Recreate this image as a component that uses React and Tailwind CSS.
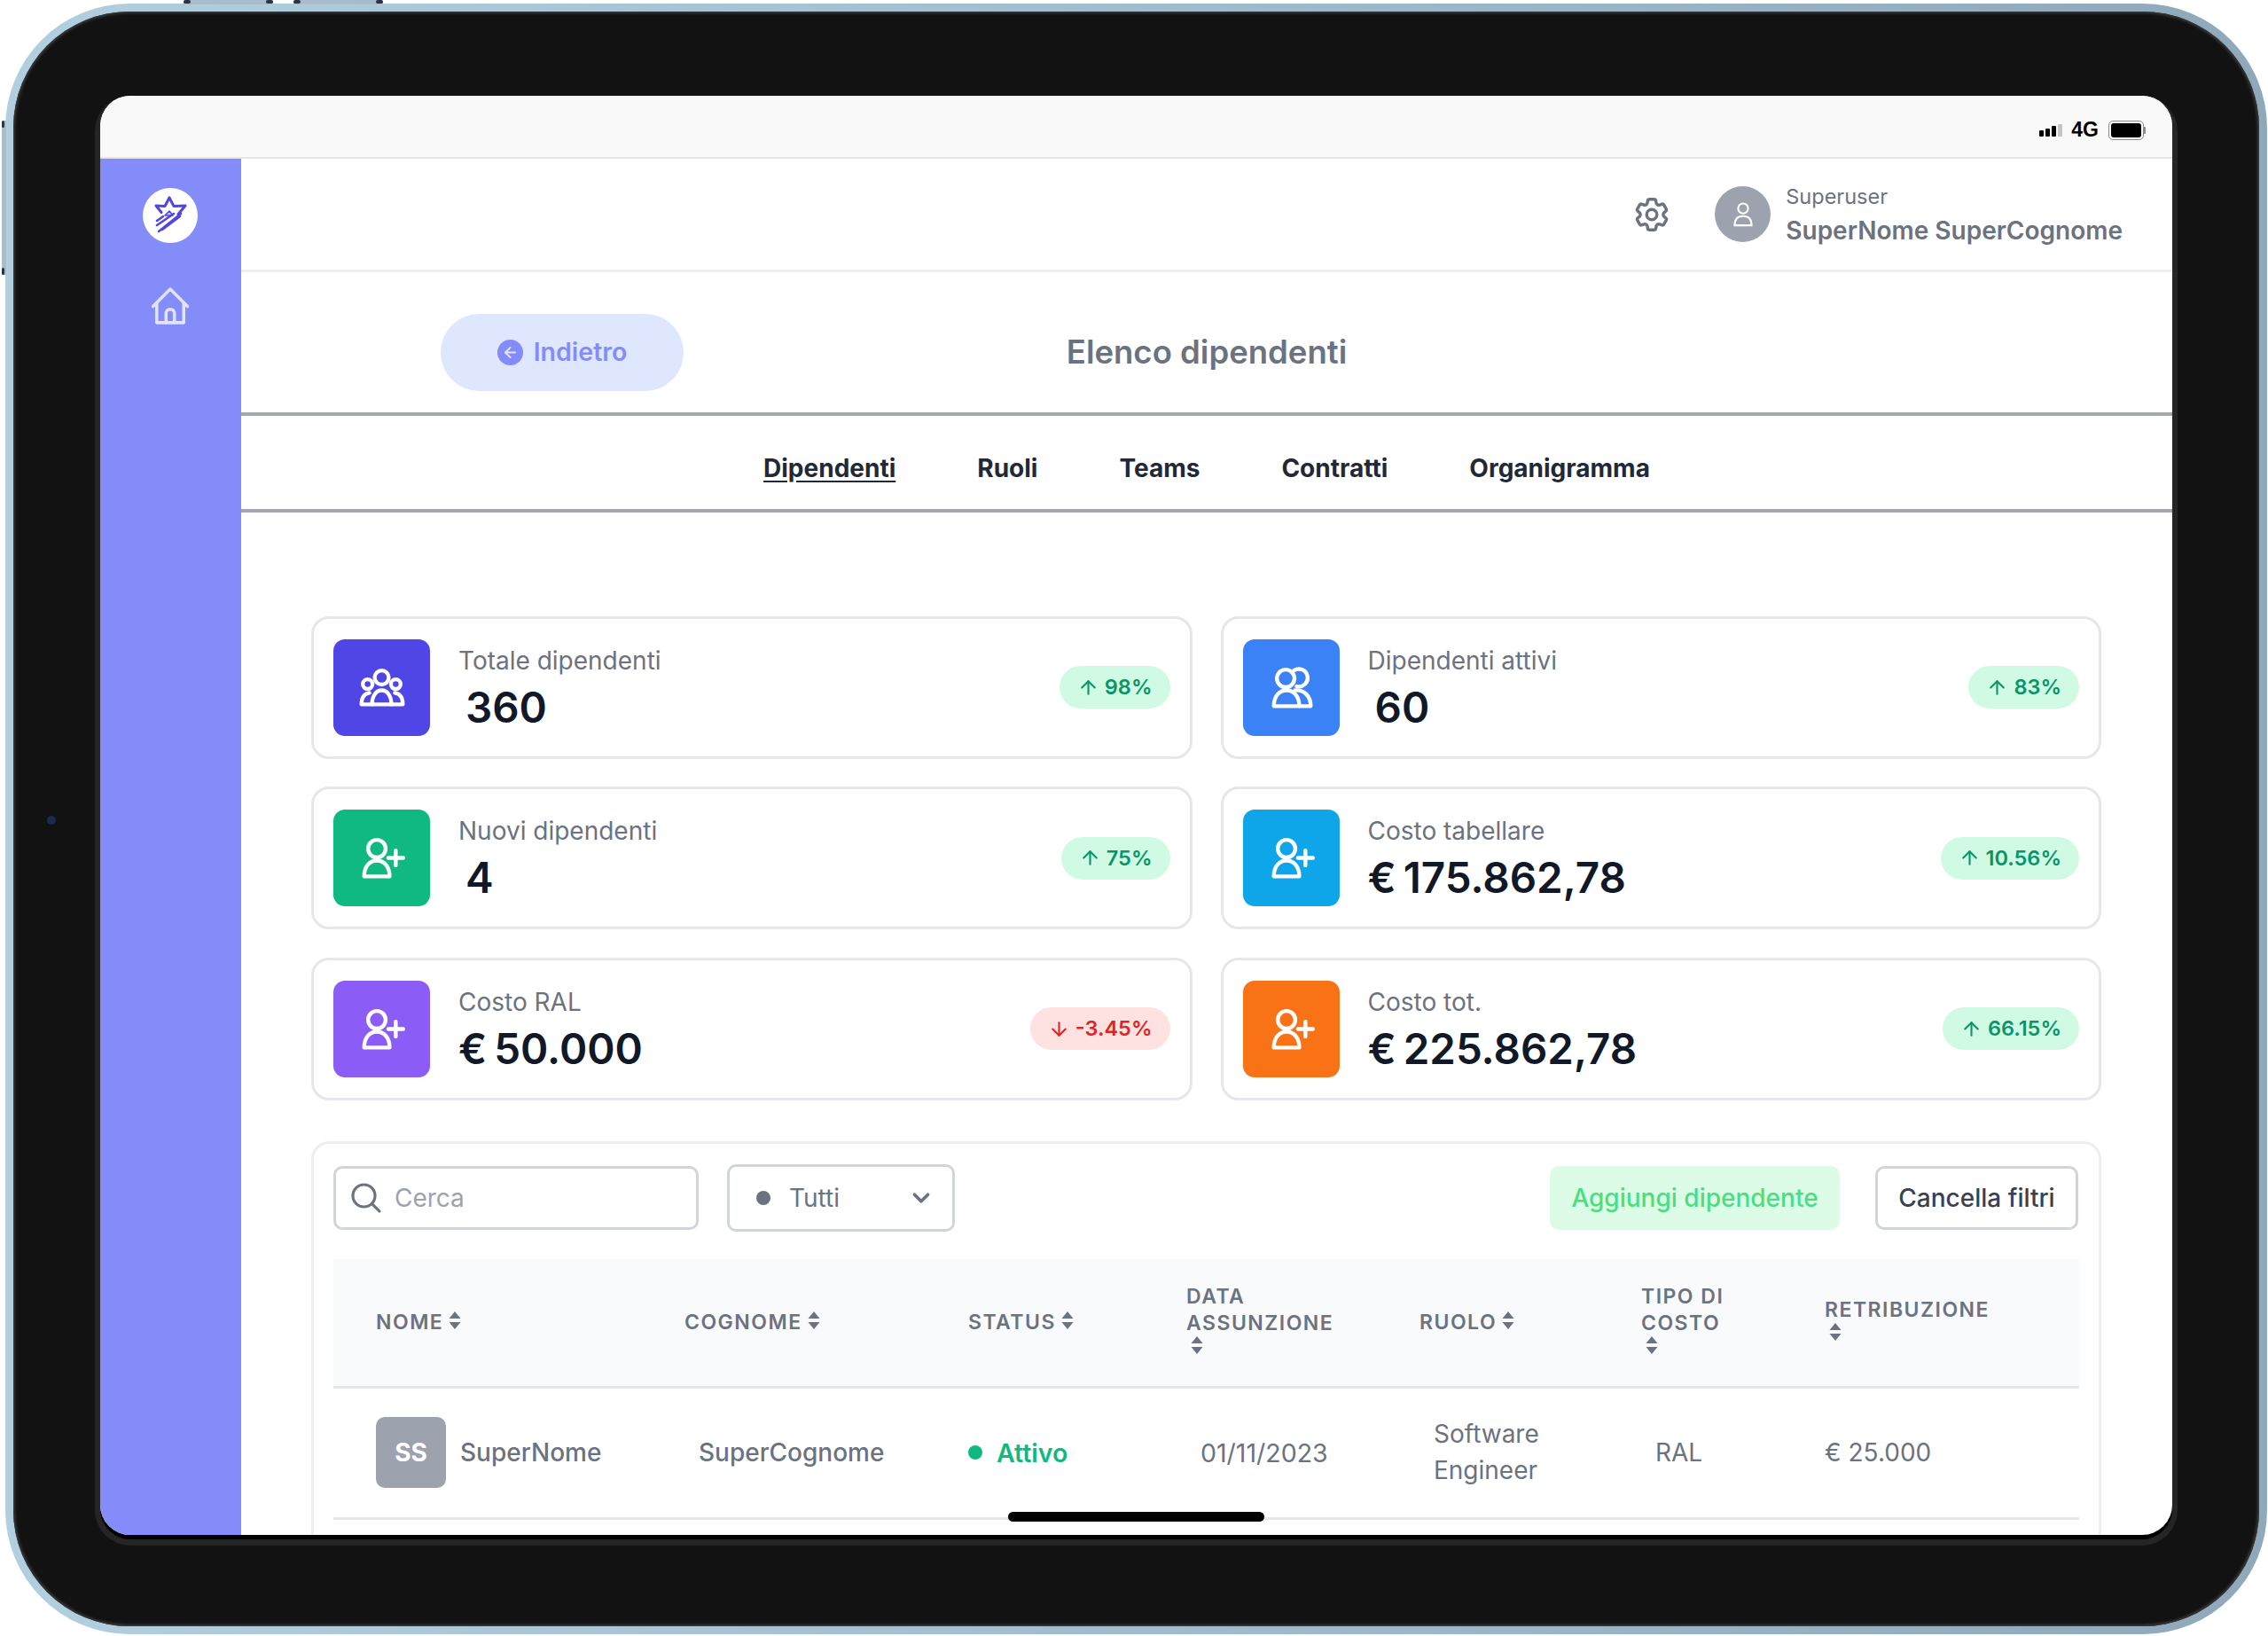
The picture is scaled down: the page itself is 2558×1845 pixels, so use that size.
import React from 'react';
import { ChevronDown, ArrowUp, ArrowDown, ArrowLeft } from 'lucide-react';
import { HiOutlineCog6Tooth, HiOutlineMagnifyingGlass } from 'react-icons/hi2';

// icons are drawn on a 110 box, same as the coloured tile
function UserPlusIcon() {
  return (
    <svg viewBox="0 0 110 110" className="w-full h-full" fill="none" stroke="white" strokeWidth="4.400" strokeLinecap="round" strokeLinejoin="round">
      <circle cx="49.500" cy="44.500" r="10" />
      <path d="M35 76c0-11 6-18 14.500-18S64 65 64 76z" />
      <path d="M71 46.500v17M62.500 55h17" />
    </svg>
  );
}

function UsersIcon() {
  return (
    <svg viewBox="0 0 110 110" className="w-full h-full" fill="none" stroke="white" strokeWidth="4.400" strokeLinecap="round" strokeLinejoin="round">
      <circle cx="48.500" cy="44.500" r="10" />
      <path d="M58 35.500a10 10 0 1 1 3 18" />
      <path d="M35 76c0-11 6-18 14.500-18S64 65 64 76z" />
      <path d="M59 58c10-1 18 6 18 18H64" />
    </svg>
  );
}

function GroupIcon() {
  return (
    <svg viewBox="0 0 110 110" className="w-full h-full" fill="none" stroke="white" strokeWidth="4.400" strokeLinecap="round" strokeLinejoin="round">
      <circle cx="55" cy="43.500" r="8" />
      <circle cx="39" cy="51" r="5.500" />
      <circle cx="71" cy="51" r="5.500" />
      <path d="M44 74c0-10 5-16 11-16s11 6 11 16" />
      <path d="M32 74h47c0-7-3-12-9-13M32 74c0-7 3-12 9-13" />
    </svg>
  );
}

function Logo() {
  return (
    <svg viewBox="0 0 62 62" className="w-[62px] h-[62px]" fill="none" stroke="#4f46e5" strokeLinecap="round" strokeLinejoin="round">
      <path d="M30 11l5 9.500 13-.5-8 9.500" strokeWidth="3" />
      <path d="M30 11l-5 9.500-10-.5 6 7.500" strokeWidth="3" />
      <path d="M25 31l5-5 4 5z" strokeWidth="1.500" fill="#c7cbf8" />
      <path d="M18 49l25-20M16 42l19-13M16 37l7-5M22 47l20-15" strokeWidth="2.500" />
    </svg>
  );
}

function HomeIcon() {
  return (
    <svg viewBox="0 0 40 40" className="w-[42px] h-[42px]" fill="none" stroke="#dfe3fb" strokeWidth="3.400" strokeLinecap="round" strokeLinejoin="round">
      <path d="M1.500 20.500L20 2l18.500 18.500" />
      <path d="M5.500 17v21h29V17" />
      <path d="M15.500 38V28a4.500 4.500 0 0 1 9 0v10" />
    </svg>
  );
}

function SortIcon({ wrap }) {
  return (
    <svg viewBox="0 0 14 20" className={wrap ? 'block ml-[5px] mb-[9px] w-[14px] h-[20px]' : 'inline-block ml-[6px] w-[14px] h-[20px] align-baseline'} fill="#6b7280">
      <path d="M7 0l6.500 8H.500zM7 20l-6.500-8h13z" />
    </svg>
  );
}

function HardwareButton({ className, cap }) {
  return (
    <div className={`absolute flex justify-between bg-[#a9bcc9] ${className}`}>
      <div className={`bg-[#2b3540] rounded-[2px] ${cap}`} />
      <div className={`bg-[#2b3540] rounded-[2px] ${cap}`} />
    </div>
  );
}

const stats = [
  { label: 'Totale dipendenti', value: '360', badge: '98%', tile: 'bg-[#4f46e5]', Icon: GroupIcon, indent: true },
  { label: 'Dipendenti attivi', value: '60', badge: '83%', tile: 'bg-[#3b82f6]', Icon: UsersIcon, indent: true },
  { label: 'Nuovi dipendenti', value: '4', badge: '75%', tile: 'bg-[#10b981]', Icon: UserPlusIcon, indent: true },
  { label: 'Costo tabellare', value: '€ 175.862,78', badge: '10.56%', tile: 'bg-[#0ea5e9]', Icon: UserPlusIcon },
  { label: 'Costo RAL', value: '€ 50.000', badge: '-3.45%', tile: 'bg-[#8b5cf6]', Icon: UserPlusIcon, down: true },
  { label: 'Costo tot.', value: '€ 225.862,78', badge: '66.15%', tile: 'bg-[#f97316]', Icon: UserPlusIcon },
];

const tabs = ['Dipendenti', 'Ruoli', 'Teams', 'Contratti', 'Organigramma'];

function StatCard({ label, value, badge, tile, Icon, indent, down }) {
  return (
    <div className="h-[161px] flex items-center px-[22px] rounded-[20px] border-[3px] border-[#e5e7eb] bg-white">
      <div className={`w-[109px] h-[109px] rounded-[13px] flex-shrink-0 ${tile}`}>
        <Icon />
      </div>
      <div className="ml-[32px] flex-1 h-[109px]">
        <div className="text-[28px] leading-[40px] mt-[4px] text-[#6b7280]">{label}</div>
        <div className={`text-[47.500px] leading-[60px] mt-[3px] font-semibold text-[#111827] [word-spacing:-4px] ${indent ? 'pl-[8px]' : ''}`}>{value}</div>
      </div>
      <div className={`h-[48px] pl-[20px] pr-[20px] rounded-full flex items-center gap-[6px] text-[23.500px] font-semibold ${down ? 'bg-[#fee2e2] text-[#dc2626]' : 'bg-[#d1fae5] text-[#059669]'}`}>
        {down ? <ArrowDown size={25} strokeWidth={2} /> : <ArrowUp size={25} strokeWidth={2} />}
        {badge}
      </div>
    </div>
  );
}

function Th({ children, className = '', wrap }) {
  return (
    <th className={`pl-[24px] pr-[16px] text-left align-middle text-[23px] leading-[30px] font-semibold tracking-[0.065em] uppercase text-[#6b7280] ${className}`}>
      {children}<SortIcon wrap={wrap} />
    </th>
  );
}

export default function App() {
  return (
    <div className="relative w-[2558px] h-[1845px] bg-white pt-[4px] pl-[6px] font-['Inter',sans-serif]">
      {/* hardware buttons and camera */}
      <HardwareButton className="top-0 left-[207px] w-[101px] h-[5px] rounded-t-[3px]" cap="w-[8px] h-[4px]" />
      <HardwareButton className="top-0 left-[331px] w-[101px] h-[5px] rounded-t-[3px]" cap="w-[8px] h-[4px]" />
      <HardwareButton className="top-[136px] left-[2px] w-[5px] h-[174px] flex-col rounded-l-[3px]" cap="w-[3px] h-[8px]" />

      <div className="w-[2551px] h-[1839px] rounded-[140px] bg-linear-to-r from-[#b2cfe0] to-[#8fa9bb] p-[9px]">
        <div className="relative w-full h-full rounded-[131px] bg-[#121212] pl-[98px] pt-[95px] shadow-[inset_0_0_3px_2px_#3a3a3a]">
          <div className="absolute left-[38px] top-[907px] w-[10px] h-[10px] rounded-full bg-[#1b2a4d]" />

          {/* screen */}
          <div className="relative w-[2337px] h-[1623px] rounded-[34px] shadow-[0_5px_0_0_#000,0_6px_0_6px_#252525]">
            <div className="w-full h-full rounded-[34px] overflow-hidden flex flex-col bg-white">
              <div className="h-[71px] flex-shrink-0 bg-[#f9f9f9] border-b-2 border-[#e5e5e5] flex items-center justify-end pt-[8px] pr-[32px] gap-[10px]">
                <div className="flex items-end gap-[2px] h-[14px]">
                  <div className="w-[5px] h-[7px] rounded-[1px] bg-black" />
                  <div className="w-[5px] h-[9px] rounded-[1px] bg-black" />
                  <div className="w-[5px] h-[12px] rounded-[1px] bg-black" />
                  <div className="w-[5px] h-[14px] rounded-[1px] bg-[#c4c4c4]" />
                </div>
                <span className="text-[23px] leading-none font-semibold text-black font-['Liberation_Sans',sans-serif]">4G</span>
                <div className="relative w-[40px] h-[22px] rounded-[5px] border border-[#8a8a8a] p-[2px] ml-[1px]">
                  <div className="w-full h-full rounded-[3px] bg-black" />
                  <div className="absolute -right-[3px] top-[6px] w-[2px] h-[8px] rounded-r-[1px] bg-[#8a8a8a]" />
                </div>
              </div>

              <div className="flex-1 flex min-h-0">
                <aside className="w-[159px] flex-shrink-0 bg-[#838cf8] flex flex-col items-center pt-[33px] pr-[2px]">
                  <div className="w-[62px] h-[62px] rounded-full bg-white">
                    <Logo />
                  </div>
                  <div className="mt-[50px]"><HomeIcon /></div>
                </aside>

                <main className="flex-1 min-w-0 flex flex-col">
                  <header className="h-[128px] flex-shrink-0 flex items-center justify-end pr-[56px] border-b-[3px] border-[#eeeff1]">
                    <HiOutlineCog6Tooth size={46} strokeWidth={1.800} className="text-[#6b7280]" />
                    <div className="ml-[48px] w-[63px] h-[63px] rounded-full bg-[#9ca3af] flex items-center justify-center">
                      <svg viewBox="0 0 30 34" className="w-[26px] h-[30px]" fill="none" stroke="white" strokeWidth="2.400">
                        <circle cx="15" cy="9" r="6.500" />
                        <path d="M4 31c0-8 4-12 11-12s11 4 11 12z" />
                      </svg>
                    </div>
                    <div className="ml-[17px]">
                      <div className="text-[23.500px] leading-[34px] text-[#6b7280]">Superuser</div>
                      <div className="text-[28px] leading-[38px] mt-[2px] font-semibold text-[#6b7280]">SuperNome SuperCognome</div>
                    </div>
                  </header>

                  <div className="h-[162px] flex-shrink-0 grid grid-cols-[1fr_auto_1fr] items-center pt-[22px] border-b-[4px] border-[#a3a8b0]">
                    <div className="pl-[225px]">
                      <button className="w-[274px] h-[87px] rounded-full bg-[#dfe7fe] flex items-center justify-center gap-[12px] text-[#838cf8] text-[28.500px] font-semibold">
                        <span className="w-[29px] h-[29px] rounded-full bg-[#838cf8] flex items-center justify-center">
                          <ArrowLeft size={19} strokeWidth={2.500} className="text-[#dfe7fe]" />
                        </span>
                        Indietro
                      </button>
                    </div>
                    <h1 className="text-[36.500px] font-semibold text-[#6b7280]">Elenco dipendenti</h1>
                    <div />
                  </div>

                  <nav className="h-[109px] flex-shrink-0 flex items-center justify-center gap-[92px] pt-[13px] border-b-[4px] border-[#a3a8b0] text-[28px] font-bold text-[#1f2937]">
                    {tabs.map((tab, i) => (
                      <span key={tab} className={i === 0 ? 'underline underline-offset-4' : ''}>{tab}</span>
                    ))}
                  </nav>

                  <div className="flex-1 min-h-0 pl-[79px] pr-[80px] pt-[116.500px]">
                    <div className="grid grid-cols-2 gap-x-[32px] gap-y-[31.500px]">
                      {stats.map((s) => <StatCard key={s.label} {...s} />)}
                    </div>

                    <section className="mt-[46px] rounded-t-[20px] border-[3px] border-b-0 border-[#eceef1] px-[22px] h-[600px]">
                      <div className="h-[122px] mb-[8.500px] flex items-center">
                        <div className="w-[412px] h-[72px] rounded-[10px] border-[3px] border-[#d1d5db] flex items-center pl-[14px] gap-[12px]">
                          <HiOutlineMagnifyingGlass size={40} strokeWidth={1.900} className="text-[#6b7280]" />
                          <span className="text-[28px] text-[#9ca3af]">Cerca</span>
                        </div>
                        <div className="ml-[32px] w-[257px] h-[76px] rounded-[10px] border-[3px] border-[#d1d5db] flex items-center pl-[30px] pr-[20px]">
                          <span className="w-[16px] h-[16px] rounded-full bg-[#6b7280]" />
                          <span className="ml-[21px] flex-1 text-[28px] text-[#6b7280]">Tutti</span>
                          <ChevronDown size={30} strokeWidth={3} className="text-[#6b7280]" />
                        </div>
                        <button className="ml-auto w-[327px] h-[72px] rounded-[10px] bg-[#dcfce7] text-[#4ade80] text-[28px] font-medium">Aggiungi dipendente</button>
                        <button className="ml-[40px] mr-[1px] w-[229px] h-[72px] rounded-[10px] border-[3px] border-[#d1d5db] text-[#374151] text-[28px] font-medium">Cancella filtri</button>
                      </div>

                      <table className="w-[1969px] table-fixed border-collapse">
                        <colgroup>
                          <col className="w-[372px]" />
                          <col className="w-[320px]" />
                          <col className="w-[246px]" />
                          <col className="w-[263px]" />
                          <col className="w-[250px]" />
                          <col className="w-[207px]" />
                          <col className="w-[311px]" />
                        </colgroup>
                        <thead>
                          <tr className="h-[144px] bg-[#f9fafb] border-b-[3px] border-[#e5e7eb]">
                            <Th className="pl-[48px]">Nome</Th>
                            <Th>Cognome</Th>
                            <Th>Status</Th>
                            <Th wrap>Data assunzione</Th>
                            <Th>Ruolo</Th>
                            <Th wrap>Tipo di costo</Th>
                            <Th wrap>Retribuzione</Th>
                          </tr>
                        </thead>
                        <tbody>
                          <tr className="h-[148px] border-b-[3px] border-[#e5e7eb] text-[28px] leading-[41px] text-[#6b7280]">
                            <td className="pl-[48px]">
                              <div className="flex items-center gap-[16px] font-medium">
                                <span className="w-[79px] h-[80px] rounded-[10px] bg-[#9ca3af] text-white font-bold flex items-center justify-center">SS</span>
                                SuperNome
                              </div>
                            </td>
                            <td className="pl-[40px] font-medium">SuperCognome</td>
                            <td className="pl-[24px]">
                              <div className="flex items-center gap-[16px] text-[#10b981] text-[28.500px] font-semibold">
                                <span className="w-[16px] h-[16px] rounded-full bg-[#10b981]" />
                                Attivo
                              </div>
                            </td>
                            <td className="pl-[40px] text-[28.500px]">01/11/2023</td>
                            <td className="pl-[40px]">Software Engineer</td>
                            <td className="pl-[40px]">RAL</td>
                            <td className="pl-[24px]">€ 25.000</td>
                          </tr>
                        </tbody>
                      </table>
                    </section>
                  </div>
                </main>
              </div>
            </div>
            {/* home indicator */}
            <div className="absolute left-[1024px] bottom-[15px] w-[289px] h-[11px] rounded-full bg-black" />
          </div>
        </div>
      </div>
    </div>
  );
}
